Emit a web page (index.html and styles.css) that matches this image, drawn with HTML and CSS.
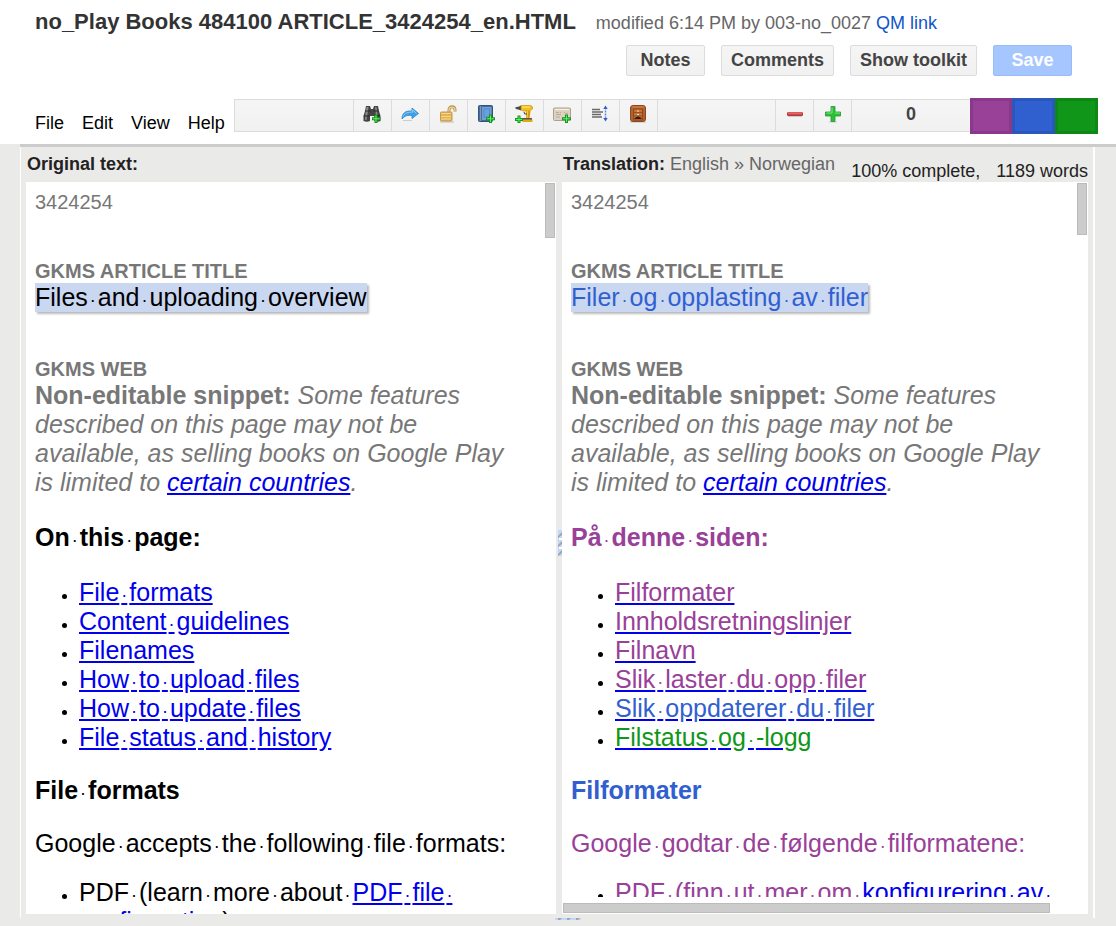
FILE: index.html
```html
<!DOCTYPE html>
<html lang="en">
<head>
<meta charset="utf-8">
<title>Translation editor</title>
<link rel="stylesheet" href="styles.css">
</head>
<body>
<div class="app">
  <header class="header">
    <div class="title-row">
      <h1 class="doc-title">no_Play Books 484100 ARTICLE_3424254_en.HTML</h1>
      <p class="doc-meta">modified 6:14 PM by 003-no_0027 <a class="qm-link" href="#">QM link</a></p>
    </div>
    <div class="actions">
      <button class="btn" type="button">Notes</button>
      <button class="btn" type="button">Comments</button>
      <button class="btn" type="button">Show toolkit</button>
      <button class="btn btn-save" type="button">Save</button>
    </div>
    <div class="tool-row">
      <nav class="menu">
        <button class="menu-item" type="button">File</button>
        <button class="menu-item" type="button">Edit</button>
        <button class="menu-item" type="button">View</button>
        <button class="menu-item" type="button">Help</button>
      </nav>
      <div class="toolbar">
        <div class="cell wide"></div>
        <button class="cell tool" type="button" aria-label="Find">
          <svg class="icon" viewBox="0 0 18 18"><path d="M3 1h4l1 3h2l1-3h4l1 5 1.500 5v5q-3 1.500-6 0v-5H7v5q-3 1.500-6.500 0v-5L2 6z" fill="#444"/><path d="M3.500 2h2L5 6 3.500 15H2l.5-7zM12 2h1.500l.7 4 .3 5h-1.500z" fill="#8a8a8a"/><path d="M.8 11h6M11 10.500h6M2.300 6h5M10.700 6h5" stroke="#262626"/><path d="M11.500 9.500h3v2.700H17.500v3h-3V18h-3v-2.800H9v-3h2.500z" fill="#17951f"/><path d="M12.500 10.500h1v2.700h3v1h-3V17h-1v-2.800h-2.500v-1h2.500z" fill="#5cf064"/></svg>
        </button>
        <button class="cell tool" type="button" aria-label="Next segment">
          <svg class="icon" viewBox="0 0 18 18"><path d="M2 15.500h9" stroke="#ccc"/><path d="M1 14C1 8 4.500 5.500 11 6V3l6.500 5.500L11 13.500v-3C6.500 10 3.500 10.800 1 14z" fill="#40a0e4" stroke="#2f83c7" stroke-width=".8"/><path d="M2 11.500C3.500 8 7 6.800 11.600 7.200V5l4 3.400" fill="none" stroke="#8bd0fb"/></svg>
        </button>
        <button class="cell tool" type="button" aria-label="Unlock">
          <svg class="icon" viewBox="0 0 18 18"><path d="M1 17h14" stroke="#bbb"/><path d="M10 8V5c0-4.300 6-4.300 6 0v1.500" fill="none" stroke="#b89353" stroke-width="3"/><path d="M10 8V5c0-3.800 6-3.800 6 0v1" fill="none" stroke="#ead193" stroke-width="1.400"/><rect x="1.500" y="7" width="11.500" height="9" rx="1" fill="#e3b455" stroke="#c4974a"/><path d="M2 8.500h10M2 11.500h10M2 14h10" stroke="#f5d78e"/></svg>
        </button>
        <button class="cell tool" type="button" aria-label="Add glossary">
          <svg class="icon" viewBox="0 0 18 18"><rect x="1.500" y=".5" width="14" height="16" rx="1" fill="#3f6e9f" stroke="#38536f"/><rect x="5" y="2" width="9.500" height="13" fill="#6ba1dc"/><rect x="7" y="4" width="5.500" height="8" fill="none" stroke="#5689c2"/><path d="M3.500 1v15" stroke="#8498aa"/><path d="M12 9.500h3v2.700H18v3h-3V18h-3v-2.800H9v-3h3z" fill="#17951f"/><path d="M13 10.500h1v2.700h3v1h-3V17h-1v-2.800h-3v-1h3z" fill="#5cf064"/></svg>
        </button>
        <button class="cell tool" type="button" aria-label="Add tool">
          <svg class="icon" viewBox="0 0 18 18"><path d="M0 2.500L4 1.500l2-1v5L4 4.800 1 4z" fill="#4b4b4b"/><path d="M6 .5h9q3 0 2.500 3.500L14.500 6H8L6 5z" fill="#f5c019" stroke="#bc850e" stroke-width=".6"/><path d="M7 2h8" stroke="#ffe87c"/><path d="M11 6h4.500l-1 8H11z" fill="#d99912"/><path d="M12.500 6l-.5 8" stroke="#f8d54c"/><path d="M9 7q0 3 3 2" fill="none" stroke="#444"/><path d="M8 13h9v2H8z" fill="#555"/><path d="M7.500 14.500h10v2.500h-10z" fill="#e0a818"/><path d="M2.500 10.500h3V13H8v3H5.500v2h-3v-2H0v-3h2.500z" fill="#17951f"/><path d="M3.500 11.500h1V14H7v1H4.500v2h-1v-2H1v-1h2.500z" fill="#5cf064"/></svg>
        </button>
        <button class="cell tool" type="button" aria-label="Add snippet">
          <svg class="icon" viewBox="0 0 18 18"><rect x=".5" y="3" width="17" height="12.500" rx="1" fill="#ddd2c0" stroke="#ada091"/><path d="M2 4.500h14" stroke="#f7f1e6"/><path d="M3 7.500h3M7 7.500h1M3 9.500h5M11 7l2 2 2-1M3 12h4" fill="none" stroke="#b5ac9f"/><path d="M12 9.500h3v2.700H18v3h-3V18h-3v-2.800H9v-3h3z" fill="#17951f"/><path d="M13 10.500h1v2.700h3v1h-3V17h-1v-2.800h-3v-1h3z" fill="#5cf064"/></svg>
        </button>
        <button class="cell tool" type="button" aria-label="Line height">
          <svg class="icon" viewBox="0 0 18 18"><path d="M1 4.500h8M1 7h11M1 9.500h9M1 12h10" stroke="#696969" stroke-width="1.400"/><path d="M14.500 2.500v12" stroke="#5d87df" stroke-width="1.400" stroke-dasharray="2 1"/><path d="M12.300 4l2.200-3.500L16.700 4zM12.300 13l2.200 3.500 2.200-3.500z" fill="#315ed2"/></svg>
        </button>
        <button class="cell tool" type="button" aria-label="Archive">
          <svg class="icon" viewBox="0 0 18 18"><path d="M1 17h16" stroke="#bbb"/><rect x="1.500" y=".5" width="15" height="16" rx="2.500" fill="#b2622c" stroke="#8d481e"/><path d="M3 2h12" stroke="#d68a50"/><rect x="4.500" y="4" width="9" height="11" fill="#c47338" stroke="#8a4a1f"/><path d="M5 7.500h8M5 11h8" stroke="#93512a"/><path d="M8 6h2M8 9.500h2" stroke="#ffe0a2"/><path d="M5 14q1.500-2.500 4-2.500T13 14z" fill="#3d1808"/></svg>
        </button>
        <div class="cell wide"></div>
        <button class="cell tool" type="button" aria-label="Decrease">
          <svg class="icon" viewBox="0 0 18 18"><path d="M2 11.500h14" stroke="#ccc"/><rect x="1.500" y="7.500" width="15" height="3" rx=".5" fill="#d64548" stroke="#b8393c"/><path d="M2 8h14" stroke="#ee8582"/></svg>
        </button>
        <button class="cell tool" type="button" aria-label="Increase">
          <svg class="icon" viewBox="0 0 18 18"><path d="M5 17h8" stroke="#ccc"/><path d="M7 1.500h4V7h5.500v4H11v5.500H7V11H1.500V7H7z" fill="#2dbf38" stroke="#26942f" stroke-width=".8"/><path d="M8 2.500V8H2.500M11 8h5" fill="none" stroke="#7be782"/></svg>
        </button>
        <div class="cell wide count">0</div>
      </div>
      <div class="swatches">
        <button class="swatch swatch-purple" type="button" aria-label="Purple segments"></button>
        <button class="swatch swatch-blue" type="button" aria-label="Blue segments"></button>
        <button class="swatch swatch-green" type="button" aria-label="Green segments"></button>
      </div>
    </div>
  </header>

  <main class="workspace">
    <div class="frame">
      <section class="column">
        <div class="column-head"><h2 class="label">Original text:</h2></div>
        <div class="pane">
          <div class="pane-content">
            <p class="tag">3424254</p>
            <p class="tag tag-bold">GKMS ARTICLE TITLE</p>
            <p class="text"><span class="active">Files<i class="dot">·</i>and<i class="dot">·</i>uploading<i class="dot">·</i>overview</span></p>
            <p class="tag tag-bold">GKMS WEB</p>
            <p class="text snippet"><b class="upright">Non-editable snippet:</b> Some features described on this page may not be available, as selling books on Google Play is limited to <a class="link" href="#">certain countries</a>.</p>
            <h3 class="heading">On<i class="dot">·</i>this<i class="dot">·</i>page:</h3>
            <ul class="list">
              <li><a class="link" href="#">File<i class="dot">·</i>formats</a></li>
              <li><a class="link" href="#">Content<i class="dot">·</i>guidelines</a></li>
              <li><a class="link" href="#">Filenames</a></li>
              <li><a class="link" href="#">How<i class="dot">·</i>to<i class="dot">·</i>upload<i class="dot">·</i>files</a></li>
              <li><a class="link" href="#">How<i class="dot">·</i>to<i class="dot">·</i>update<i class="dot">·</i>files</a></li>
              <li><a class="link" href="#">File<i class="dot">·</i>status<i class="dot">·</i>and<i class="dot">·</i>history</a></li>
            </ul>
            <h3 class="heading">File<i class="dot">·</i>formats</h3>
            <p class="text">Google<i class="dot">·</i>accepts<i class="dot">·</i>the<i class="dot">·</i>following<i class="dot">·</i>file<i class="dot">·</i>formats:</p>
            <ul class="list">
              <li>PDF<i class="dot">·</i>(learn<i class="dot">·</i>more<i class="dot">·</i>about<i class="dot">·</i><a class="link" href="#">PDF<i class="dot">·</i>file<i class="dot">·</i><wbr>configuration</a>)</li>
            </ul>
          </div>
          <div class="thumb thumb-left"></div>
        </div>
      </section>
      <div class="splitter">
        <svg class="grip" viewBox="0 0 4 26"><path d="M0 0h4v26H0z" fill="#c3d7fb"/><path d="M0 6l4-4v3L0 8zM0 15l4-4v3l-4 3zM0 24l4-4v3l-4 3z" fill="#9fa5ae"/><path d="M1 8h3v2H1zM1 17h3v2H1z" fill="#fff"/></svg>
      </div>
      <section class="column">
        <div class="column-head">
          <h2 class="label">Translation: <span class="langs">English » Norwegian</span></h2>
          <p class="progress"><span>100% complete,</span><span>1189 words</span></p>
        </div>
        <div class="pane pane-scroll">
          <div class="pane-content">
            <p class="tag">3424254</p>
            <p class="tag tag-bold">GKMS ARTICLE TITLE</p>
            <p class="text blue"><span class="active">Filer<i class="dot">·</i>og<i class="dot">·</i>opplasting<i class="dot">·</i>av<i class="dot">·</i>filer</span></p>
            <p class="tag tag-bold">GKMS WEB</p>
            <p class="text snippet"><b class="upright">Non-editable snippet:</b> Some features described on this page may not be available, as selling books on Google Play is limited to <a class="link" href="#">certain countries</a>.</p>
            <h3 class="heading purple">På<i class="dot">·</i>denne<i class="dot">·</i>siden:</h3>
            <ul class="list">
              <li><a class="link" href="#"><span class="purple">Filformater</span></a></li>
              <li><a class="link" href="#"><span class="purple">Innholdsretningslinjer</span></a></li>
              <li><a class="link" href="#"><span class="purple">Filnavn</span></a></li>
              <li><a class="link" href="#"><span class="purple">Slik<i class="dot">·</i>laster<i class="dot">·</i>du<i class="dot">·</i>opp<i class="dot">·</i>filer</span></a></li>
              <li><a class="link" href="#"><span class="blue">Slik<i class="dot">·</i>oppdaterer<i class="dot">·</i>du<i class="dot">·</i>filer</span></a></li>
              <li><a class="link" href="#"><span class="green">Filstatus<i class="dot">·</i>og<i class="dot">·</i>-logg</span></a></li>
            </ul>
            <h3 class="heading blue">Filformater</h3>
            <p class="text purple">Google<i class="dot">·</i>godtar<i class="dot">·</i>de<i class="dot">·</i>følgende<i class="dot">·</i>filformatene:</p>
            <ul class="list">
              <li><span class="purple">PDF<i class="dot">·</i>(finn<i class="dot">·</i>ut<i class="dot">·</i>mer<i class="dot">·</i>om<i class="dot">·</i></span><a class="link" href="#">konfigurering<i class="dot">·</i>av<i class="dot">·</i></a></li>
            </ul>
          </div>
          <div class="thumb thumb-right"></div>
          <div class="thumb thumb-bottom"></div>
        </div>
      </section>
    </div>
    <svg class="foot-grip" viewBox="0 0 26 2"><path d="M0 0h26v2H0z" fill="#c3d7fb"/><path d="M3 0h4L5 2H3zM12 0h4l-2 2h-2zM21 0h4l-2 2h-2z" fill="#9fa5ae"/></svg>
  </main>
</div>
</body>
</html>
```

FILE: styles.css
```css
* {
  box-sizing: border-box;
}

body {
  margin: 0;
  background: #fff;
  color: #222;
  font-family: Arial, "Liberation Sans", sans-serif;
  font-size: 18px;
}

h1, h2, h3, p, ul {
  margin: 0;
  padding: 0;
}

button {
  font: inherit;
  color: inherit;
  border: 0;
  padding: 0;
  background: none;
}

.app {
  display: flex;
  flex-direction: column;
  height: 100vh;
}

.header {
  flex: none;
  padding: 8px 18px 10px 35px;
}

.title-row {
  display: flex;
  align-items: baseline;
  gap: 20px;
  height: 37px;
  white-space: nowrap;
}

.doc-title {
  font-size: 22px;
  line-height: 28px;
  color: #333;
}

.doc-meta {
  color: #666;
}

.qm-link {
  color: #15c;
  text-decoration: none;
}

.actions {
  display: flex;
  justify-content: flex-end;
  gap: 16px;
  padding-right: 26px;
}

.btn {
  height: 31px;
  min-width: 79px;
  padding: 0 9px;
  border: 1px solid #dcdcdc;
  border-radius: 2px;
  background: linear-gradient(#f5f5f5, #f1f1f1);
  color: #444;
  font-weight: bold;
}

.btn-save {
  border-color: #98bcf8;
  background: #a6c6ff;
  color: #fff;
}

.tool-row {
  display: flex;
  align-items: center;
  padding-top: 22px;
}

.menu {
  display: flex;
  gap: 18px;
  padding: 14px 9px 0 0;
  color: #000;
}

.toolbar {
  display: flex;
  flex: 1;
  height: 33px;
  margin-bottom: 2px;
  border: 1px solid #dcdcdc;
  border-right: 0;
  background: linear-gradient(#f5f5f5, #f1f1f1);
}

.cell {
  display: flex;
  justify-content: center;
  align-items: center;
}

.cell + .cell {
  border-left: 1px solid #dcdcdc;
}

.tool {
  flex: 0 0 38px;
  padding-bottom: 2px;
}

.wide {
  flex: 1;
}

.icon {
  width: 18px;
  height: 18px;
}

.count {
  padding-bottom: 2px;
  color: #444;
  font-weight: bold;
}

.swatches {
  display: flex;
}

.swatch {
  width: 43px;
  height: 36px;
  border: 3px solid;
}

.swatch:first-child {
  width: 42px;
}

.swatch-purple {
  background: #994099;
  border-color: #8a398a;
}

.swatch-blue {
  background: #3060d0;
  border-color: #2b57bc;
}

.swatch-green {
  background: #109618;
  border-color: #0e8716;
}

.workspace {
  display: flex;
  flex: 1;
  flex-direction: column;
  min-height: 0;
  padding: 0 0 6px 20px;
  background: linear-gradient(#eaeae8, #eaeae8);
}

.frame {
  display: flex;
  flex: 1;
  min-height: 0;
  padding-bottom: 4px;
  border-top: 3px solid #ccc;
}

.frame::before,
.frame::after {
  content: "";
  flex: none;
  background: #fff;
}

.frame::before {
  width: 1px;
  margin: 0 5px -4px 0;
}

.frame::after {
  width: 2px;
  margin: 0 21px -4px 5px;
}

.column {
  display: flex;
  flex: 530 1 0;
  flex-direction: column;
  min-width: 0;
}

.splitter + .column {
  flex-grow: 526;
}

.column-head {
  display: flex;
  flex: none;
  justify-content: space-between;
  height: 35px;
  padding: 7px 0 0 1px;
  white-space: nowrap;
}

.label {
  font-size: 18px;
  line-height: 21px;
}

.langs {
  color: #666;
  font-weight: normal;
}

.progress {
  display: flex;
  gap: 16px;
  padding-top: 7px;
}

.pane {
  position: relative;
  display: flex;
  flex: 1;
  min-height: 0;
  background: #fff;
}

.pane-scroll {
  padding-bottom: 17px;
}

.pane-content {
  flex: 1;
  overflow: hidden;
  padding: 9px 34px 0 9px;
  color: #000;
  font-size: 25px;
  line-height: 29px;
}

.tag {
  color: #777;
  font-size: 20px;
  line-height: 23px;
}

.tag-bold {
  margin-top: 46px;
  font-weight: bold;
}

.active {
  display: inline-block;
  background: #c9d7f1;
  box-shadow: 2px 2px 2px #bbb;
}

.snippet {
  margin-bottom: 26px;
  color: #777;
  font-style: italic;
}

.upright {
  font-style: normal;
}

.heading {
  margin: 24px 0;
  font-size: 25px;
}

.link {
  color: #00e;
}

.list {
  margin: 20px 0;
  padding-left: 44px;
}

.heading + .list {
  margin-top: 26px;
}

.list li::marker {
  font-size: 18px;
}

.dot {
  padding: 0 2px;
  font-size: 18px;
  font-style: normal;
  font-weight: normal;
  line-height: 1;
}

.purple {
  color: #994099;
}

.blue {
  color: #3060d0;
}

.green {
  color: #109618;
}

.thumb {
  position: absolute;
  background: #ccc;
  border: 1px solid #bbb;
}

.thumb-left,
.thumb-right {
  top: 1px;
  right: 1px;
  width: 10px;
  height: 55px;
}

.thumb-right {
  height: 52px;
}

.thumb-bottom {
  left: 1px;
  right: 38px;
  bottom: 1px;
  height: 10px;
}

.splitter {
  display: flex;
  flex: 0 0 6px;
  align-items: center;
  justify-content: flex-end;
  padding-top: 24px;
}

.grip {
  width: 4px;
  height: 26px;
}

.foot-grip {
  flex: none;
  align-self: center;
  width: 26px;
  height: 2px;
}
```
